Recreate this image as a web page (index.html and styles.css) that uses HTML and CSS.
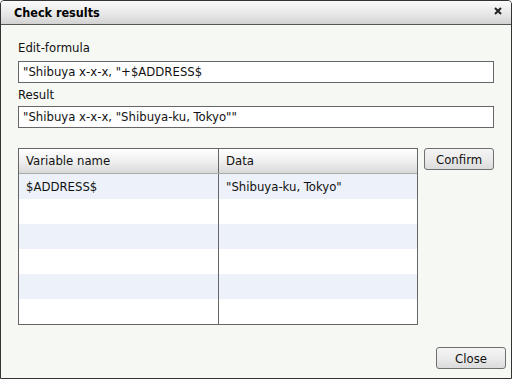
FILE: index.html
```html
<!DOCTYPE html>
<html lang="en">
<head>
<meta charset="UTF-8">
<title>Check results</title>
<link rel="stylesheet" href="styles.css">
</head>
<body>

<div class="dialogo">
    <div class="titulo">
        <span>Check results</span>
        <svg class="cerrar" width="8" height="8" viewBox="0 0 8 8">
            <path d="M1 1 L7 7 M7 1 L1 7" stroke="#222" stroke-width="2"/>
        </svg>
    </div>
    <div class="cuerpo">
        <div class="etiqueta">Edit-formula</div>
        <div class="campo">"Shibuya x-x-x, "+$ADDRESS$</div>
        <div class="etiqueta etiqueta-2">Result</div>
        <div class="campo campo-2">"Shibuya x-x-x, "Shibuya-ku, Tokyo""</div>

        <div class="zona-tabla">
            <div class="tabla">
                <div class="fila cabecera">
                    <div class="celda">Variable name</div>
                    <div class="celda">Data</div>
                </div>
                <div class="fila par">
                    <div class="celda">$ADDRESS$</div>
                    <div class="celda">"Shibuya-ku, Tokyo"</div>
                </div>
                <div class="fila"><div class="celda"></div><div class="celda"></div></div>
                <div class="fila par"><div class="celda"></div><div class="celda"></div></div>
                <div class="fila"><div class="celda"></div><div class="celda"></div></div>
                <div class="fila par"><div class="celda"></div><div class="celda"></div></div>
                <div class="fila"><div class="celda"></div><div class="celda"></div></div>
            </div>
            <button class="boton">Confirm</button>
        </div>

        <div class="pie">
            <button class="boton">Close</button>
        </div>
    </div>
</div>

</body>
</html>
```

FILE: styles.css
```css
body, html {
    margin: 0;
    padding: 0;
    font-family: 'DejaVu Sans Condensed', 'DejaVu Sans', sans-serif;
    font-size: 13px;
    color: #111;
}
.dialogo {
    width: 512px;
    height: 379px;
    box-sizing: border-box;
    border: 1px solid #333;
    border-radius: 4px 4px 0 0;
    background-color: #f6f8f4;
    display: flex;
    flex-direction: column;
    overflow: hidden;
}
.titulo {
    height: 23px;
    border-bottom: 1px solid #555;
    background: linear-gradient(#fbfbfb, #e6e6e6 60%, #d2d2d2);
    display: flex;
    align-items: center;
    justify-content: space-between;
    padding: 0 9px 0 13px;
    font-weight: bold;
    font-size: 12.5px;
    color: #000;
}
.cerrar {
    margin-top: -4px;
}
.cuerpo {
    flex: 1;
    display: flex;
    flex-direction: column;
    padding: 14px 17px 9px 17px;
}
.etiqueta {
    height: 18px;
    line-height: 18px;
}
.etiqueta-2 {
    margin-top: 3px;
}
.campo {
    margin-top: 4px;
    height: 20px;
    line-height: 20px;
    border: 1px solid #666;
    background-color: #fff;
    padding: 0 4px;
    white-space: nowrap;
}
.campo-2 {
    margin-top: 2px;
}
.zona-tabla {
    margin-top: 20px;
    display: flex;
    align-items: flex-start;
    gap: 6px;
}
.tabla {
    width: 399px;
    border: 1px solid #666;
    background-color: #fff;
}
.fila {
    display: flex;
    height: 25px;
}
.fila.par {
    background-color: #edf2fa;
}
.fila.cabecera {
    height: 24px;
    border-bottom: 1px solid #aaa;
    background: linear-gradient(#ffffff, #f0f0f0 50%, #d9d9d9);
}
.celda {
    line-height: 25px;
    padding: 0 7px;
    white-space: nowrap;
}
.cabecera .celda {
    line-height: 24px;
}
.celda:first-child {
    width: 185px;
    border-right: 1px solid #666;
}
.boton {
    width: 70px;
    height: 22px;
    border: 1px solid #707070;
    border-radius: 3px;
    background: linear-gradient(#f4f4f4, #ebebeb 50%, #dbdbdb);
    font-family: inherit;
    font-size: 13px;
    color: #111;
    padding: 0;
}
.pie {
    margin-top: auto;
    display: flex;
    justify-content: flex-end;
    margin-right: -12px;
}
```
